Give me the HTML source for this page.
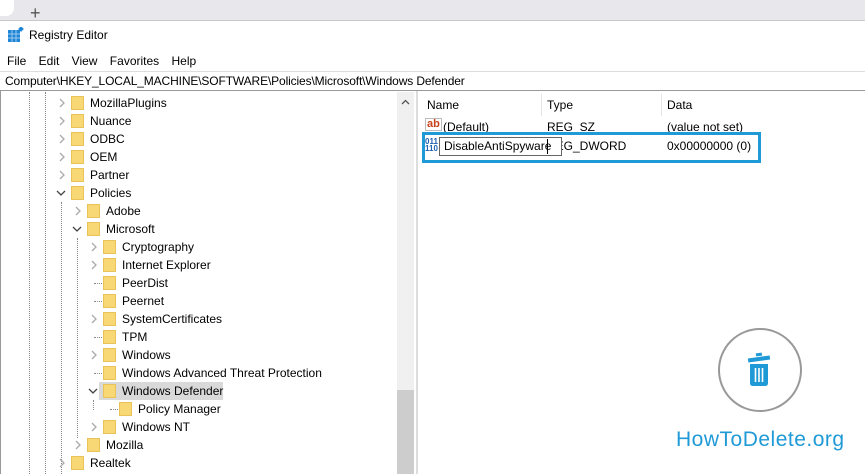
<html><head><style>
body{margin:0;width:865px;height:474px;overflow:hidden;background:#fff;font-family:"Liberation Sans",sans-serif;font-size:12px;color:#000;position:relative}
.a{position:absolute;white-space:nowrap}
.f{position:absolute;width:13px;height:14px;background:#f8d775;border:1px solid #e9c25a;box-sizing:border-box}
.dl{position:absolute;border-left:1px dotted #888}
.dh{position:absolute;border-top:1px dotted #888;width:8px}
</style></head><body>
<div class="a" style="left:0;top:0;width:865px;height:20px;background:#e8e8ec;border-bottom:1px solid #c8c8cc"></div>
<div class="a" style="left:0;top:0;width:14px;height:16px;background:#fff;border-radius:0 0 8px 0"></div>
<div class="a" style="left:30px;top:5px;font-size:18px;color:#555;line-height:16px">+</div>
<svg class="a" style="left:8px;top:27px" width="16" height="16"><rect x="0" y="3" width="12" height="12" fill="#1e86d6"/><path d="M0 7H12M0 11H12M4 3V15M8 3V15" stroke="#9ccaf0" stroke-width="1"/><rect x="11" y="0" width="4" height="4" fill="#1e86d6" transform="rotate(45 13 2)"/></svg>
<div class="a" style="left:29px;top:28px;font-size:12px">Registry Editor</div>
<div class="a" style="left:7px;top:54px;word-spacing:9px">File Edit View Favorites Help</div>
<div class="a" style="left:0;top:71px;width:865px;height:20px;border-top:1px solid #ddd;border-bottom:1px solid #999;box-sizing:border-box"></div>
<div class="a" style="left:5px;top:74px;letter-spacing:-0.13px">Computer\HKEY_LOCAL_MACHINE\SOFTWARE\Policies\Microsoft\Windows Defender</div>
<div class="a" style="left:0;top:91px;width:1px;height:383px;background:#999"></div>
<div class="a" style="left:397px;top:92px;width:17px;height:382px;background:#f0f0f0"></div>
<div class="a" style="left:397px;top:390px;width:17px;height:84px;background:#cdcdcd"></div>
<svg class="a" style="left:401px;top:99px" width="9" height="6"><path d="M1 5L4.5 1.5L8 5" stroke="#555" fill="none" stroke-width="1.3"/></svg>
<div class="a" style="left:416px;top:91px;width:2px;height:383px;background:#ddd"></div>
<div class="dl" style="left:29px;top:92px;height:382px"></div>
<div class="dl" style="left:45px;top:92px;height:382px"></div>
<div class="dl" style="left:61px;top:202px;height:272px"></div>
<div class="dl" style="left:77px;top:238px;height:200px"></div>
<div class="dl" style="left:93px;top:400px;height:10px"></div>
<div class="a" style="left:99px;top:382px;width:124px;height:18px;background:#d9d9d9"></div>
<div id="t"></div>
<script>
var R=[["MozillaPlugins",1,">"],["Nuance",1,">"],["ODBC",1,">"],["OEM",1,">"],["Partner",1,">"],["Policies",1,"v"],["Adobe",2,">"],["Microsoft",2,"v"],["Cryptography",3,">"],["Internet Explorer",3,">"],["PeerDist",3,"."],["Peernet",3,"."],["SystemCertificates",3,">"],["TPM",3,"."],["Windows",3,">"],["Windows Advanced Threat Protection",3,"."],["Windows Defender",3,"v"],["Policy Manager",4,"."],["Windows NT",3,">"],["Mozilla",2,">"],["Realtek",1,">"]];
var h="";R.forEach(function(r,i){var y=94+18*i,o=16*(r[1]-1);
if(r[2]==">")h+='<svg class="a" style="left:'+(58+o)+'px;top:'+(y+4)+'px" width="8" height="10"><path d="M2 1L6 5L2 9" stroke="#aaa" fill="none" stroke-width="1.3"/></svg>';
else if(r[2]=="v")h+='<svg class="a" style="left:'+(56+o)+'px;top:'+(y+5)+'px" width="10" height="8"><path d="M1 2L5 6L9 2" stroke="#444" fill="none" stroke-width="1.3"/></svg>';
else h+='<div class="dh" style="left:'+(62+o)+'px;top:'+(y+9)+'px"></div>';
h+='<div class="f" style="left:'+(71+o)+'px;top:'+(y+2)+'px"></div><div class="a" style="left:'+(90+o)+'px;top:'+(y+2)+'px">'+r[0]+'</div>';});
document.getElementById("t").innerHTML=h;
</script>
<div class="a" style="left:427px;top:98px">Name</div>
<div class="a" style="left:541px;top:94px;width:1px;height:22px;background:#e5e5e5"></div>
<div class="a" style="left:547px;top:98px">Type</div>
<div class="a" style="left:661px;top:94px;width:1px;height:22px;background:#e5e5e5"></div>
<div class="a" style="left:667px;top:98px">Data</div>
<div class="a" style="left:425px;top:118px;font-size:11px;font-weight:bold;color:#c8411b;border:1px solid #bbb;height:11px;line-height:11px;padding:0 1px">ab</div>
<div class="a" style="left:443px;top:120px">(Default)</div>
<div class="a" style="left:547px;top:120px">REG_SZ</div>
<div class="a" style="left:667px;top:120px">(value not set)</div>
<div class="a" style="left:425px;top:138px;font-size:8px;line-height:7px;color:#1e5fb0;font-weight:bold">011<br>110</div>
<div class="a" style="left:547px;top:139px">REG_DWORD</div>
<div class="a" style="left:439px;top:137px;width:123px;height:19px;background:#fff;border:1px solid #666;box-sizing:border-box"></div>
<div class="a" style="left:444px;top:139px">DisableAntiSpyware</div>
<div class="a" style="left:547px;top:139px;width:1px;height:15px;background:#000"></div>
<div class="a" style="left:667px;top:139px">0x00000000 (0)</div>
<div class="a" style="left:422px;top:132px;width:339px;height:31px;border:3px solid #1f9ad6;box-sizing:border-box"></div>
<svg class="a" style="left:715px;top:325px" width="90" height="90"><circle cx="45" cy="45" r="41" fill="#fff" stroke="#999" stroke-width="2"/><g fill="#1f9ad6"><rect x="33" y="32" width="22" height="4" transform="rotate(-8 44 34)"/><rect x="41" y="28" width="6" height="3" transform="rotate(-8 44 30)"/><path d="M35 39H53V58Q53 61 50 61H38Q35 61 35 58Z"/></g><path d="M40.5 43V57M44 43V57M47.5 43V57" stroke="#fff" stroke-width="1.6"/></svg>
<div class="a" style="left:676px;top:428px;font-size:21px;color:#1f9ad6;letter-spacing:0.5px">HowToDelete.org</div>
</body></html>
